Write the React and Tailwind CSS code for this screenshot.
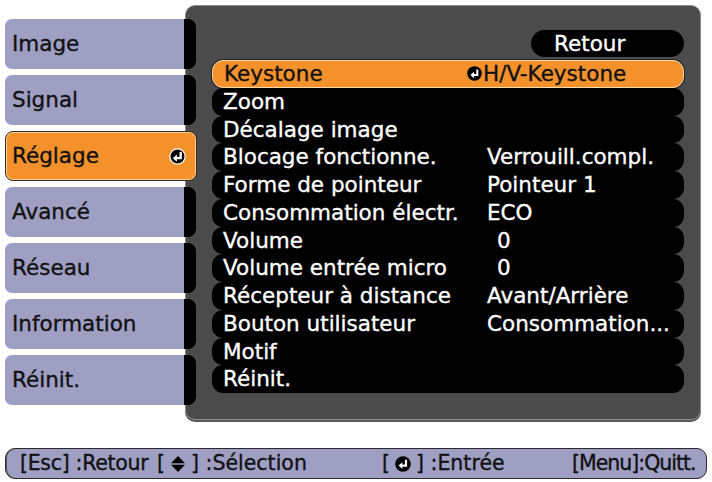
import React from 'react';

const FONT = { fontFamily: '"DejaVu Sans", Verdana, sans-serif' };

const tabs = ['Image', 'Signal', 'Réglage', 'Avancé', 'Réseau', 'Information', 'Réinit.'];

const rows = [
  { name: 'Keystone', value: 'H/V-Keystone', selected: true },
  { name: 'Zoom' },
  { name: 'Décalage image' },
  { name: 'Blocage fonctionne.', value: 'Verrouill.compl.' },
  { name: 'Forme de pointeur', value: 'Pointeur 1' },
  { name: 'Consommation électr.', value: 'ECO' },
  { name: 'Volume', value: '0', indent: true },
  { name: 'Volume entrée micro', value: '0', indent: true },
  { name: 'Récepteur à distance', value: 'Avant/Arrière' },
  { name: 'Bouton utilisateur', value: 'Consommation...' },
  { name: 'Motif' },
  { name: 'Réinit.' },
];

// round "enter" key glyph
const EnterIcon = ({ size = 15, ring = false }) => (
  <svg width={size} height={size} viewBox="0 0 16 16" className="shrink-0">
    <circle cx="8" cy="8" r={ring ? 7.2 : 7.8} fill="#000" stroke={ring ? '#fff' : 'none'} strokeWidth="1.2" />
    <path d="M11 3.8 V9.6 H7" stroke="#fff" strokeWidth="2.2" fill="none" />
    <path d="M3.6 9.6 L7.4 6.2 V13 Z" fill="#fff" />
  </svg>
);

const UpDownIcon = () => (
  <svg width="16" height="18" viewBox="0 0 16 18" className="shrink-0">
    <path d="M8 1 L15 8.2 H1 Z" fill="#000" />
    <path d="M1 9.8 H15 L8 17 Z" fill="#000" />
  </svg>
);

function Tab({ label, active }) {
  if (active) {
    return (
      <div className="flex h-[50px] w-[192px] items-center justify-between rounded-[8px] border border-[#3a2a1a] bg-[#f5912b] pl-[6px] pr-[10px] shadow-[inset_0_0_0_1px_#fbd3a2]">
        <span className="text-[21.5px] text-[#111]">{label}</span>
        <EnterIcon size={17} ring />
      </div>
    );
  }
  return (
    <div className="flex h-[50px] w-[191px]">
      <div className="flex w-[179px] items-center rounded-l-[7px] bg-[#9f9fc4] pl-[7px]">
        <span className="text-[21.5px] text-[#111]">{label}</span>
      </div>
      <div className="w-[12px] rounded-r-[8px] bg-black" />
    </div>
  );
}

function MenuRow({ row }) {
  const base = row.selected
    ? 'bg-[#f5912b] text-[#111] border border-[#fbd9ad] shadow-[0_0_0_1px_#222]'
    : 'bg-black text-white';
  return (
    <div className={`flex h-[27.75px] items-center rounded-[11px] pl-[11px] ${base}`}>
      {row.selected ? (
        <>
          <span className="w-[243px] text-[21.5px] leading-none">{row.name}</span>
          <EnterIcon size={15} />
          <span className="ml-[1px] text-[21.5px] leading-none">{row.value}</span>
        </>
      ) : (
        <>
          <span className="w-[264px] text-[21.5px] leading-none">{row.name}</span>
          {row.value && (
            <span className={`text-[21.5px] leading-none ${row.indent ? 'pl-[10px]' : ''}`}>
              {row.value}
            </span>
          )}
        </>
      )}
    </div>
  );
}

export default function App() {
  return (
    <div className="h-[482px] w-[712px] overflow-hidden bg-white [-webkit-text-stroke:0.35px]" style={FONT}>
      <div className="flex pl-[5px] pt-[5px]">
        <div className="relative z-10 flex w-[180px] flex-col gap-[6px] pt-[14px]">
          {tabs.map((t) => (
            <Tab key={t} label={t} active={t === 'Réglage'} />
          ))}
        </div>

        <div className="flex h-[415px] w-[516px] flex-col rounded-[10px] border border-[#8c8c8c] bg-[#4b4b4b] pl-[26px] pr-[16px] pt-[24px] shadow-[0_2px_0_#5a5a5a]">
          <div className="flex h-[27px] w-[153px] items-center self-end rounded-full bg-black pl-[23px]">
            <span className="text-[21.5px] leading-none text-white">Retour</span>
          </div>
          <div className="mt-[3px] flex flex-col">
            {rows.map((r) => (
              <MenuRow key={r.name} row={r} />
            ))}
          </div>
        </div>
      </div>

      <div className="ml-[5px] mt-[28px] flex h-[31px] w-[702px] items-center rounded-[10px] border border-[#2a2a2a] bg-[#9f9fc4] pl-[14px] text-[20.5px] text-[#111] shadow-[inset_1px_0_0_#555]">
        <span className="w-[137px] whitespace-nowrap tracking-[-0.3px]">[Esc] :Retour</span>
        <span className="flex w-[225px] items-center whitespace-nowrap">
          [<span className="mx-[5px] flex"><UpDownIcon /></span>] :Sélection
        </span>
        <span className="flex w-[190px] items-center whitespace-nowrap">
          [<span className="mx-[5px] flex"><EnterIcon size={16} /></span>] :Entrée
        </span>
        <span className="whitespace-nowrap tracking-[-1px]">[Menu]:Quitt.</span>
      </div>
    </div>
  );
}
